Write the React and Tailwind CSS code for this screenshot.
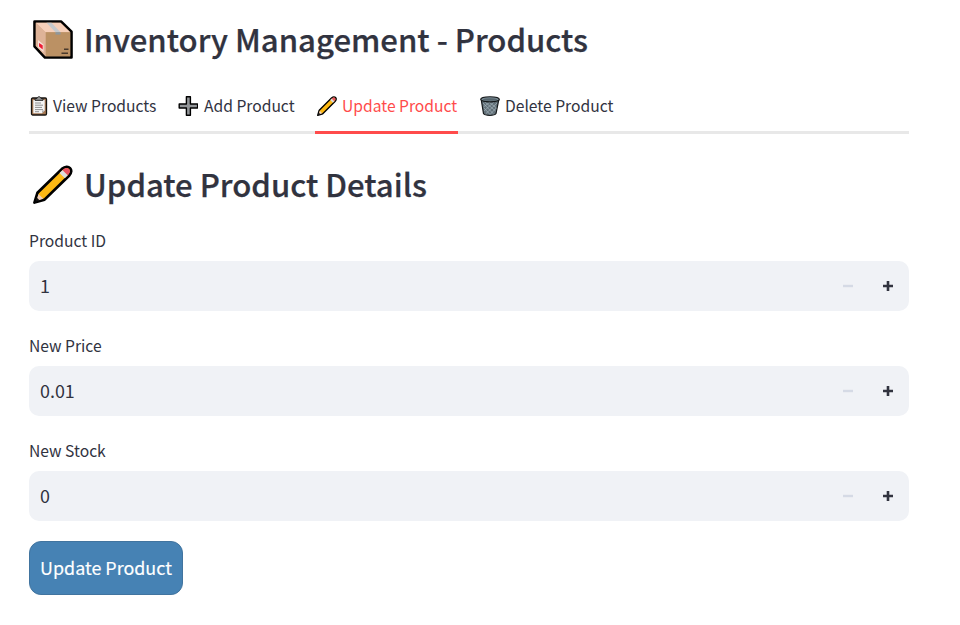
import React from "react";

function PackageIcon() {
  return (
    <svg width="40" height="39" viewBox="0 0 40 40" preserveAspectRatio="none" className="block">
      <path d="M1.5 1.5H28L38.5 12V38.5H12L1.5 27Z" fill="#d9ac8b" stroke="#000" strokeWidth="2.6" strokeLinejoin="round" />
      <path d="M2.8 2.8H27.5L37.2 12.5H12.5Z" fill="#f6cfb9" />
      <path d="M12.5 12.5H37.2V37.2H12.5Z" fill="#bb9164" />
      <path d="M2.8 2.8L12.5 12.5V37.2L2.8 26.5Z" fill="#deb398" />
      <path d="M13.5 2.8H18.5L27.5 12.5H22.5Z" fill="#c6c9cc" />
      <path d="M22.5 12.5H27.5V15H22.5Z" fill="#8e979c" />
      <path d="M5 20.5L10.5 25V33L5 28Z" fill="#f9dfd8" />
      <path d="M6 23.5L9.7 26V30.3L6 27.3Z" fill="#ed1c34" />
      <path d="M31 30H35.5M28.5 34H35" stroke="#49392b" strokeWidth="1.5" />
    </svg>
  );
}

function PencilIcon({ width, height }) {
  return (
    <svg width={width} height={height} viewBox="0 0 40 40" preserveAspectRatio="none" className="block">
      <path d="M1.5 38.5L4.5 28.5L29 4C35.5 -1.5 41.5 5 36 11L11.5 35.5Z" fill="#fcb813" stroke="#000" strokeWidth="2.8" strokeLinejoin="round" />
      <path d="M5.5 29.7L10.3 34.5L3.3 36.8Z" fill="#f2d1be" />
      <path d="M2.4 37.6L3.8 33.4L6.7 36.3Z" fill="#111" />
      <path d="M26.5 8.2L31.8 13.5L34.9 10.4L29.6 5.1Z" fill="#dcdcdc" />
      <path d="M29.5 5.2C34.5 0 40 5.5 34.8 10.5Z" fill="#e95464" />
    </svg>
  );
}

function ClipboardIcon() {
  return (
    <svg width="18" height="20" viewBox="0 0 18 20" className="block">
      <rect x="1.5" y="2" width="15" height="17" rx="1.2" fill="#a77954" stroke="#181512" strokeWidth="1.3" />
      <path d="M3.3 4H14.7V14.5L12 17.3H3.3Z" fill="#f4f4f4" />
      <path d="M14.7 14.5H12V17.3Z" fill="#aaa" />
      <path d="M5 4.3V2.5H7C7.3 .2 10.7 .2 11 2.5H13V4.3Z" fill="#999" stroke="#222" strokeWidth="1" />
      <path d="M5 7H11M5 9.2H13M5 11.4H12M5 13.6H13M5 15.7H9" stroke="#777" strokeWidth=".8" />
    </svg>
  );
}

function PlusIcon() {
  return (
    <svg width="20" height="20" viewBox="0 0 20 20" className="block">
      <path d="M8.4 .8H12.4V8H19.6V12H12.4V19.2H8.4V12H1.2V8H8.4Z" fill="#929598" stroke="#000" strokeWidth="1.4" strokeLinejoin="round" />
    </svg>
  );
}

function TrashIcon() {
  return (
    <svg width="20" height="20" viewBox="0 0 20 20" className="-ml-[0.5px] mr-[0.5px] block">
      <path d="M1.2 3.5L3.5 17.5C5 19.9 14.5 19.9 16 17.5L18.8 3.5Z" fill="#627078" stroke="#15191b" strokeWidth="1.2" />
      <path d="M3 7L13 17.5M5 6L15.5 15M9 6L16.5 12M4 12L10 18.5M17 7L6 17.5M14 6L4 15M10 6L3.5 11M16.2 12L10 18.5" stroke="#a3b3bb" strokeWidth=".7" />
      <ellipse cx="10" cy="3.3" rx="9.3" ry="2.6" fill="#7d8f98" stroke="#15191b" strokeWidth="1.1" />
      <ellipse cx="10" cy="3.5" rx="7" ry="1.3" fill="#56656d" />
    </svg>
  );
}

function Tab({ icon, label, active, labelClass }) {
  return (
    <div className={`flex h-[51px] items-start border-b-[3px] pt-[8px] ${active ? "border-[#ff4b4b] text-[#ff4b4b]" : "border-transparent"}`}>
      <div className="flex h-[30px] items-center">
        {icon}
        <span className={`whitespace-nowrap text-[15.65px] leading-[30px] ${labelClass}`}>{label}</span>
      </div>
    </div>
  );
}

function NumberField({ label, value }) {
  return (
    <div className="h-[105px]">
      <div className="h-[30px] text-[15.65px] leading-[20px]">{label}</div>
      <div className="flex h-[50px] items-center rounded-[10px] bg-[#f0f2f6] pl-[11px] text-[17.9px]">
        <span className="flex-1 pb-[2px]">{value}</span>
        <svg width="80" height="50" viewBox="0 0 80 50">
          <path d="M14 25H24" stroke="#d5dae5" strokeWidth="2.4" />
          <path d="M54 25H64M59 20V30" stroke="#31333f" strokeWidth="2.6" />
        </svg>
      </div>
    </div>
  );
}

export default function App() {
  return (
    <div className="h-[625px] w-[960px] overflow-hidden bg-white pl-[29px] pr-[51px] pt-[20px] font-['Noto_Sans_CJK_SC','Noto_Sans',sans-serif] text-[#31333f]">
      <h1 className="flex h-[39px] items-center pl-1 text-[31.1px] font-medium [-webkit-text-stroke:0.25px_#31333f]">
        <PackageIcon />
        <span className="-mt-px ml-[11px] whitespace-nowrap">Inventory Management - Products</span>
      </h1>
      <div className="mt-[24px] flex h-[51px] border-b-[3px] border-[#e8e8e8]">
        <div className="flex h-[51px]">
          <div className="w-[149px] pl-px"><Tab icon={<ClipboardIcon />} label="View Products" labelClass="ml-[5px]" /></div>
          <div className="w-[137px]"><Tab icon={<PlusIcon />} label="Add Product" labelClass="ml-[6px]" /></div>
          <div className="w-[143px]"><Tab active icon={<span className="ml-[2px]"><PencilIcon width={20} height={20} /></span>} label="Update Product" labelClass="ml-[5px]" /></div>
          <div className="ml-[22px]"><Tab icon={<TrashIcon />} label="Delete Product" labelClass="ml-[5px]" /></div>
        </div>
      </div>
      <h2 className="mt-[31px] flex h-[39px] items-center pl-1 text-[31.1px] font-medium [-webkit-text-stroke:0.25px_#31333f]">
        <PencilIcon width={40} height={39} />
        <span className="-mt-px ml-[11px] whitespace-nowrap">Update Product Details</span>
      </h2>
      <div className="mt-[27px]">
        <NumberField label="Product ID" value="1" />
        <NumberField label="New Price" value="0.01" />
        <NumberField label="New Stock" value="0" />
      </div>
      <button className="mt-[-5px] flex h-[54px] w-[154px] items-center justify-center whitespace-nowrap rounded-[12px] border border-[#41749f] bg-[#4682b4] pb-[2px] text-[17.9px] text-white [-webkit-text-stroke:0.15px_#fff]">
        Update Product
      </button>
    </div>
  );
}
